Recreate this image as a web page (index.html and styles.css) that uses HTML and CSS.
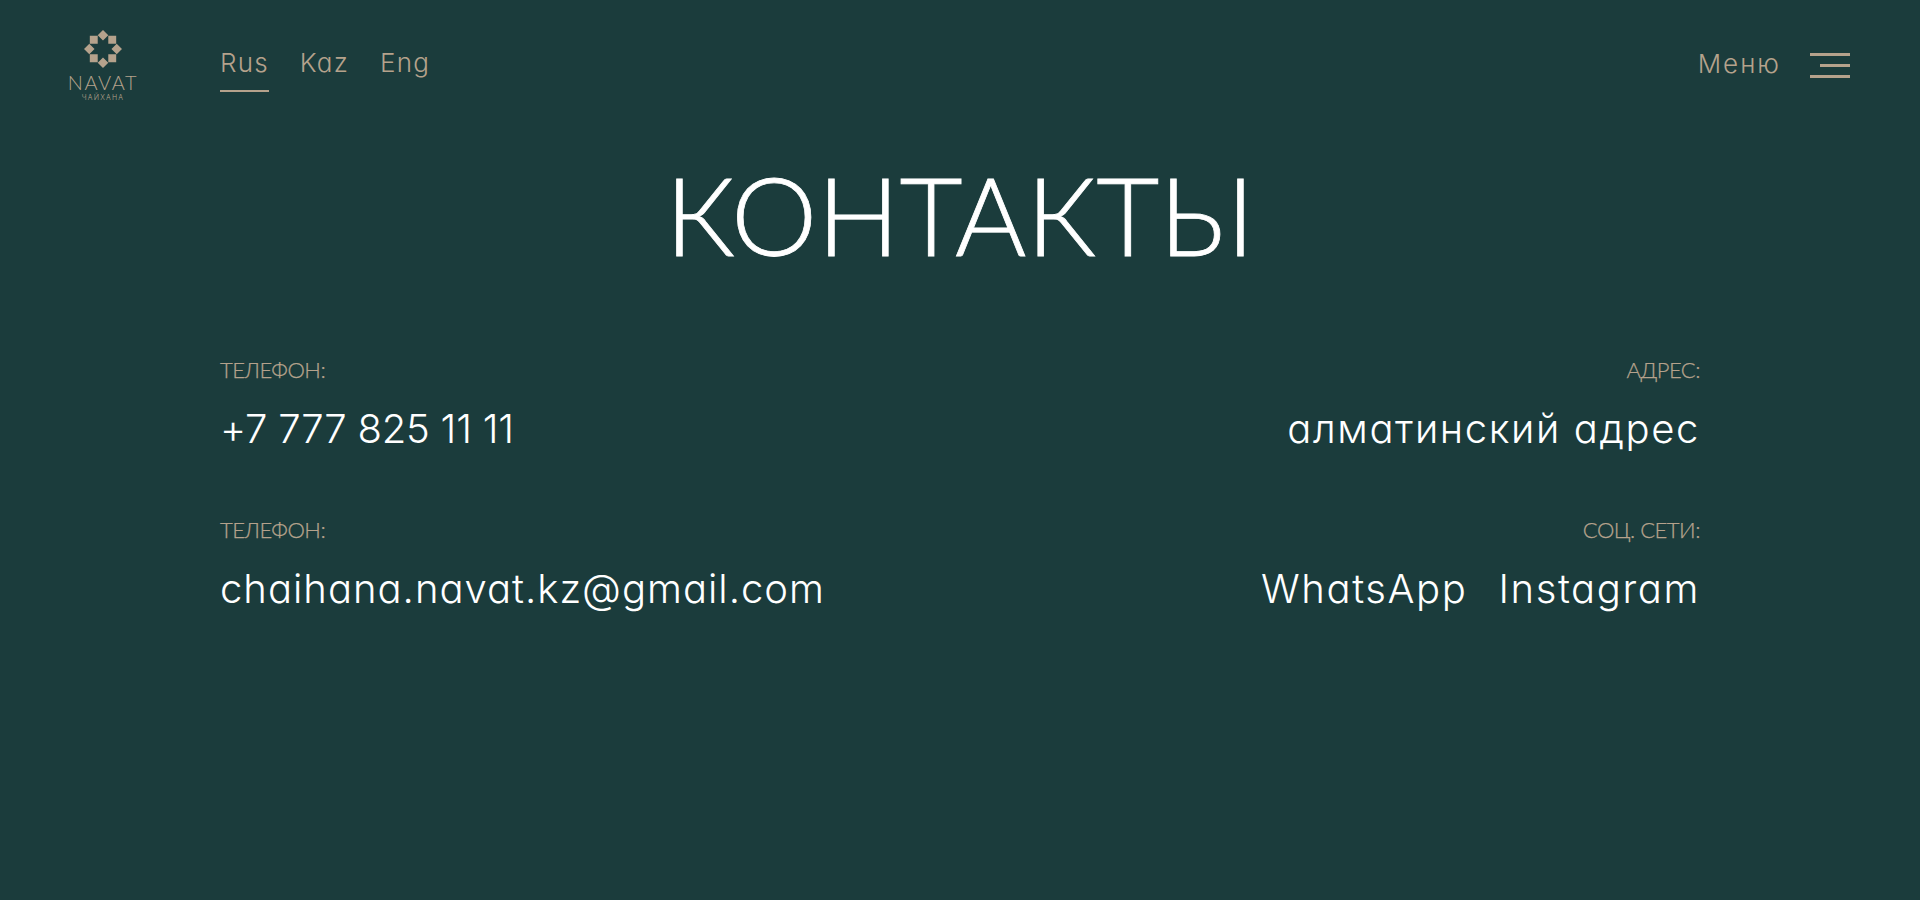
FILE: index.html
```html
<!DOCTYPE html>
<html lang="ru">

<head>
    <meta charset="UTF-8">
    <meta name="viewport" content="width=device-width, initial-scale=1.0">
    <title>Контакты</title>
    <link rel="stylesheet" href="styles.css">
</head>

<body>
    <header class="header">
        <a class="logo" href="#">
            <svg class="logo-mark" viewBox="0 0 36 36" width="38" height="38">
                <path d="M18 0l5 5-5 5-5-5z M5.500 5.500h7.500v7.500h-7.500z M23 5.500h7.500v7.500h-7.500z M5 13l5 5-5 5-5-5z M31 13l5 5-5 5-5-5z M5.500 23h7.500v7.500h-7.500z M23 23h7.500v7.500h-7.500z M18 26l5 5-5 5-5-5z" />
            </svg>
            <span class="logo-name">NAVAT</span>
            <span class="logo-sub">ЧАЙХАНА</span>
        </a>
        <nav class="langs">
            <a class="lang lang-active" href="#">Rus</a>
            <a class="lang" href="#">Kaz</a>
            <a class="lang" href="#">Eng</a>
        </nav>
        <button class="menu-btn" type="button">
            <span class="menu-text">Меню</span>
            <span class="burger">
                <span class="burger-line"></span>
                <span class="burger-line burger-short"></span>
                <span class="burger-line"></span>
            </span>
        </button>
    </header>

    <main class="contacts">
        <h1 class="title">КОНТАКТЫ</h1>
        <div class="contacts-grid">
            <div class="contact">
                <div class="contact-label">ТЕЛЕФОН:</div>
                <a class="contact-value contact-phone" href="#">+7 777 825 11 11</a>
            </div>
            <div class="contact contact-right">
                <div class="contact-label">АДРЕС:</div>
                <a class="contact-value" href="#">алматинский адрес</a>
            </div>
            <div class="contact">
                <div class="contact-label">ТЕЛЕФОН:</div>
                <a class="contact-value contact-email" href="#">chaihana.navat.kz@gmail.com</a>
            </div>
            <div class="contact contact-right">
                <div class="contact-label">СОЦ. СЕТИ:</div>
                <div class="socials">
                    <a class="contact-value" href="#">WhatsApp</a>
                    <a class="contact-value" href="#">Instagram</a>
                </div>
            </div>
        </div>
    </main>
</body>

</html>
```

FILE: styles.css
```css
html, body {
    margin: 0;
    padding: 0;
}

body {
    min-height: 900px;
    background-color: #1b3c3c;
    font-family: "Inter", sans-serif;
    font-feature-settings: "cv11";
    font-weight: 300;
    overflow: hidden;
}

a {
    color: inherit;
    text-decoration: none;
}

.header {
    display: flex;
    align-items: center;
    height: 70px;
    padding: 30px 70px 0 68px;
    color: #b5a28c;
}

.logo {
    display: flex;
    flex-direction: column;
    align-items: center;
    width: 70px;
    margin-top: 2px;
    margin-right: 82px;
}

.logo-mark {
    fill: #b5a28c;
}

.logo-name {
    margin-top: 3px;
    font-family: "Lato", sans-serif;
    font-size: 20px;
    line-height: 22px;
    letter-spacing: 1.6px;
}

.logo-sub {
    font-size: 7px;
    line-height: 9px;
    letter-spacing: 1.2px;
}

.langs {
    display: flex;
    gap: 31px;
}

.lang {
    font-size: 26px;
    letter-spacing: 1.2px;
    line-height: 36px;
    padding: 6px 0 9px;
    border-bottom: 2px solid transparent;
}

.lang-active {
    border-bottom-color: #b5a28c;
}

.menu-btn {
    display: flex;
    align-items: center;
    gap: 29px;
    margin-left: auto;
    padding: 0;
    border: none;
    background: none;
    color: inherit;
    font: inherit;
}

.menu-text {
    margin-bottom: 4px;
    font-size: 26px;
    letter-spacing: 2px;
}

.burger {
    display: flex;
    flex-direction: column;
    align-items: flex-end;
    gap: 8px;
    width: 40px;
}

.burger-line {
    width: 100%;
    height: 3px;
    background-color: #b5a28c;
}

.burger-short {
    width: 30px;
}

.contacts {
    padding: 0 220px;
}

.title {
    margin: 49px 0 0;
    color: #fff;
    font-family: "Lato", sans-serif;
    font-size: 109px;
    font-weight: 300;
    line-height: 130px;
    text-align: center;
    -webkit-text-stroke: 0.8px #fff;
}

.contacts-grid {
    display: grid;
    grid-template-columns: 1fr 1fr;
    row-gap: 63px;
    margin-top: 78px;
}

.contact-right {
    text-align: right;
}

.contact-label {
    margin-bottom: 21px;
    color: #b5a28c;
    font-family: "Lato", sans-serif;
    font-size: 22px;
    font-weight: 300;
    letter-spacing: -0.5px;
    line-height: 26px;
    -webkit-text-stroke: 0.25px #b5a28c;
}

.contact-value {
    color: #fff;
    font-size: 40px;
    letter-spacing: 1.6px;
    line-height: 50px;
}

.contact-phone {
    letter-spacing: -0.2px;
}

.contact-email {
    letter-spacing: 1px;
}

.socials {
    display: flex;
    justify-content: flex-end;
    gap: 31px;
}
```
